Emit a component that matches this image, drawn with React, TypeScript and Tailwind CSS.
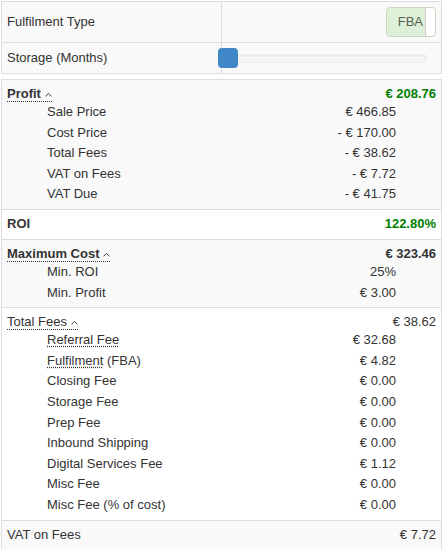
import React from 'react';

type Item = { label: React.ReactNode; value: string };

type SectionProps = {
  title: string;
  value: string;
  bg: string;
  bold?: boolean;
  valueClass?: string;
  collapsible?: boolean;
  items?: Item[];
};

const Caret = () => (
  <svg width="7" height="5" viewBox="0 0 7 5" className="inline-block ml-[4px] align-[1px]">
    <path d="M0.6 4.4 L3.5 1.3 L6.4 4.4" fill="none" stroke="#444" strokeWidth="1" />
  </svg>
);

const Dotted = ({ children }: { children: React.ReactNode }) => (
  <span className="underline decoration-dotted decoration-[#333] underline-offset-[2px]">{children}</span>
);

const Section: React.FC<SectionProps> = ({ title, value, bg, bold, valueClass = '', collapsible, items }) => (
  <div className={`border-t border-[#ddd] px-[5px] pt-[6px] ${items ? 'pb-[4px]' : 'pb-[8px]'} ${bg}`}>
    <div className="flex justify-between leading-[15px]">
      {collapsible ? (
        <span className={`border-b border-dotted border-[#333] ${bold ? 'font-bold' : ''}`}>
          {title}
          <Caret />
        </span>
      ) : (
        <span className={bold ? 'font-bold' : ''}>{title}</span>
      )}
      <span className={valueClass}>{value}</span>
    </div>
    {items?.map((it, i) => (
      <div key={i} className="flex justify-between pl-[40px] pr-[40px] leading-[20.6px]">
        <span>{it.label}</span>
        <span>{it.value}</span>
      </div>
    ))}
  </div>
);

export default function App() {
  return (
    <div className="min-h-[549px] bg-white text-[13px] text-[#333] font-['Liberation_Sans',Arial,sans-serif]">
      <div className="w-[441px] ml-[1px] pt-[1px]">
        {/* settings table */}
        <div className="border border-[#ddd] bg-[#f9f9f9]">
          <div className="grid grid-cols-[220px_1fr] border-b border-[#ddd]">
            <div className="h-[40px] flex items-center px-[5px] border-r border-[#ddd]">Fulfilment Type</div>
            <div className="h-[40px] flex items-center justify-end pr-[5px]">
              <div className="flex h-[30px] w-[50px] rounded-[4px] border border-[#c9d8c0] bg-[#dff0d8] overflow-hidden">
                <span className="flex-1 flex items-center justify-end pr-[2px] text-[#55604f]">FBA</span>
                <span className="w-[10px] bg-white border-l border-[#ccc] rounded-r-[3px]" />
              </div>
            </div>
          </div>
          <div className="grid grid-cols-[220px_1fr]">
            <div className="h-[30px] flex items-center px-[5px] border-r border-[#ddd]">Storage (Months)</div>
            <div className="h-[30px] flex items-center pl-[5px] pr-[14px]">
              <div className="relative flex-1 h-[9px] rounded-[4px] bg-[#f5f5f5] border border-[#ececec] shadow-[inset_0_1px_2px_rgba(0,0,0,0.05)]">
                <div className="absolute left-[-10px] top-[-6.5px] w-[20px] h-[20px] rounded-[4px] bg-[#3f87c7]" />
              </div>
            </div>
          </div>
        </div>

        {/* results */}
        <div className="mt-[5px] border-x border-b border-[#ddd]">
          <Section
            title="Profit"
            value="€ 208.76"
            bg="bg-[#f9f9f9]"
            bold
            collapsible
            valueClass="font-bold text-[#008000]"
            items={[
              { label: 'Sale Price', value: '€ 466.85' },
              { label: 'Cost Price', value: '- € 170.00' },
              { label: 'Total Fees', value: '- € 38.62' },
              { label: 'VAT on Fees', value: '- € 7.72' },
              { label: 'VAT Due', value: '- € 41.75' },
            ]}
          />
          <Section title="ROI" value="122.80%" bg="bg-white" bold valueClass="font-bold text-[#008000]" />
          <Section
            title="Maximum Cost"
            value="€ 323.46"
            bg="bg-[#f9f9f9]"
            bold
            collapsible
            valueClass="font-bold"
            items={[
              { label: 'Min. ROI', value: '25%' },
              { label: 'Min. Profit', value: '€ 3.00' },
            ]}
          />
          <Section
            title="Total Fees"
            value="€ 38.62"
            bg="bg-white"
            collapsible
            items={[
              { label: <Dotted>Referral Fee</Dotted>, value: '€ 32.68' },
              { label: <><Dotted>Fulfilment</Dotted> (FBA)</>, value: '€ 4.82' },
              { label: 'Closing Fee', value: '€ 0.00' },
              { label: 'Storage Fee', value: '€ 0.00' },
              { label: 'Prep Fee', value: '€ 0.00' },
              { label: 'Inbound Shipping', value: '€ 0.00' },
              { label: 'Digital Services Fee', value: '€ 1.12' },
              { label: 'Misc Fee', value: '€ 0.00' },
              { label: 'Misc Fee (% of cost)', value: '€ 0.00' },
            ]}
          />
          <Section title="VAT on Fees" value="€ 7.72" bg="bg-[#f9f9f9]" />
        </div>
      </div>
    </div>
  );
}
